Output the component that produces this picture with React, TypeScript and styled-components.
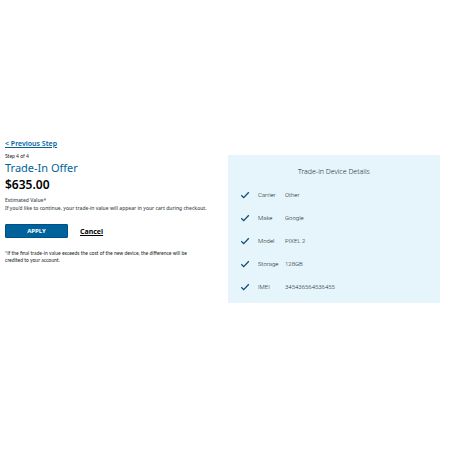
import React from "react";
import styled, { createGlobalStyle } from "styled-components";

const GlobalStyle = createGlobalStyle`
  * { box-sizing: border-box; }
  body {
    margin: 0;
    background: #fff;
    color: #161b20;
    font-family: "Noto Sans", "Open Sans", sans-serif;
  }
`;

const Page = styled.main`
  display: grid;
  grid-template-columns: minmax(0, 218fr) minmax(0, 212fr);
  align-items: start;
  gap: 5px;
  padding: 138px 10px 0 5px;
`;

const Offer = styled.section`
  display: flex;
  flex-direction: column;
  align-items: flex-start;
`;

const PreviousLink = styled.a`
  color: #00629b;
  font-size: 7px;
  line-height: 11px;
  font-weight: 600;
  text-decoration: underline;
`;

const Step = styled.p`
  margin: 4px 0 0;
  font-family: Lato, sans-serif;
  font-size: 5px;
  line-height: 7px;
`;

const Title = styled.h1`
  margin: 0;
  color: #00629b;
  font-size: 11px;
  line-height: 16px;
  font-weight: 400;
`;

const Amount = styled.p`
  margin: 0;
  color: #000;
  font-size: 12px;
  line-height: 18px;
  font-weight: 600;
`;

const Copy = styled.p`
  margin: 0;
  color: #454b52;
  font-size: 5px;
  line-height: 8px;
  font-weight: 500;
  white-space: nowrap;
`;

const Estimate = styled.div`
  margin-top: 2px;
`;

const Actions = styled.div`
  display: flex;
  align-items: center;
  gap: 12px;
  margin-top: 12px;
`;

const ApplyButton = styled.button`
  width: 63px;
  height: 14px;
  padding: 0;
  border: 1px solid #00508a;
  border-radius: 1px;
  background: #00629b;
  color: #fff;
  font: 700 6px/12px "Noto Sans", sans-serif;
`;

const CancelLink = styled.a`
  color: #000;
  font-size: 7px;
  line-height: 11px;
  font-weight: 700;
  text-decoration: underline;
`;

const Disclaimer = styled.p`
  max-width: 184px;
  margin: 12px 0 0;
  font-family: Lato, sans-serif;
  font-size: 5px;
  line-height: 7px;
`;

const Details = styled.section`
  margin-top: 17px;
  padding: 11px 12px 5px;
  background: #e6f5fb;
  color: #20282f;
`;

const DetailsTitle = styled.h2`
  margin: 0 0 5px;
  font-size: 7px;
  line-height: 12px;
  font-weight: 300;
  text-align: center;
`;

const DetailsTable = styled.table`
  border-collapse: collapse;
  font-family: Roboto, sans-serif;
  font-size: 6px;
  line-height: 9px;
  font-weight: 300;
`;

const Row = styled.tr`
  height: 23px;
`;

const CheckCell = styled.td`
  width: 18px;
  padding: 0;
`;

const Label = styled.th`
  width: 27px;
  padding: 0;
  font-weight: 300;
  text-align: left;
`;

const Value = styled.td`
  padding: 0;
`;

const CheckIcon = styled.svg`
  display: block;
  width: 10px;
  height: 8px;
`;

const details = [
  ["Carrier", "Other"],
  ["Make", "Google"],
  ["Model", "PIXEL 2"],
  ["Storage", "128GB"],
  ["IMEI", "345436564536455"],
];

export default function App() {
  return (
    <>
      <GlobalStyle />
      <Page>
        <Offer>
          <PreviousLink href="#previous">&lt; Previous Step</PreviousLink>
          <Step>Step 4 of 4</Step>
          <Title>Trade-In Offer</Title>
          <Amount>$635.00</Amount>
          <Estimate>
            <Copy>Estimated Value*</Copy>
            <Copy>If you’d like to continue, your trade-in value will appear in your cart during checkout.</Copy>
          </Estimate>
          <Actions>
            <ApplyButton type="button">APPLY</ApplyButton>
            <CancelLink href="#cancel">Cancel</CancelLink>
          </Actions>
          <Disclaimer>
            *If the final trade-in value exceeds the cost of the new device, the difference will be credited to your account.
          </Disclaimer>
        </Offer>
        <Details>
          <DetailsTitle>Trade-in Device Details</DetailsTitle>
          <DetailsTable>
            <tbody>
              {details.map(([label, value]) => (
                <Row key={label}>
                  <CheckCell>
                    <CheckIcon viewBox="0 0 10 8" aria-hidden="true">
                      <path d="M1.3 4.3 L3.7 6.6 L8.8 1.2" fill="none" stroke="#124c79" strokeWidth="1.3" />
                    </CheckIcon>
                  </CheckCell>
                  <Label scope="row">{label}</Label>
                  <Value>{value}</Value>
                </Row>
              ))}
            </tbody>
          </DetailsTable>
        </Details>
      </Page>
    </>
  );
}
